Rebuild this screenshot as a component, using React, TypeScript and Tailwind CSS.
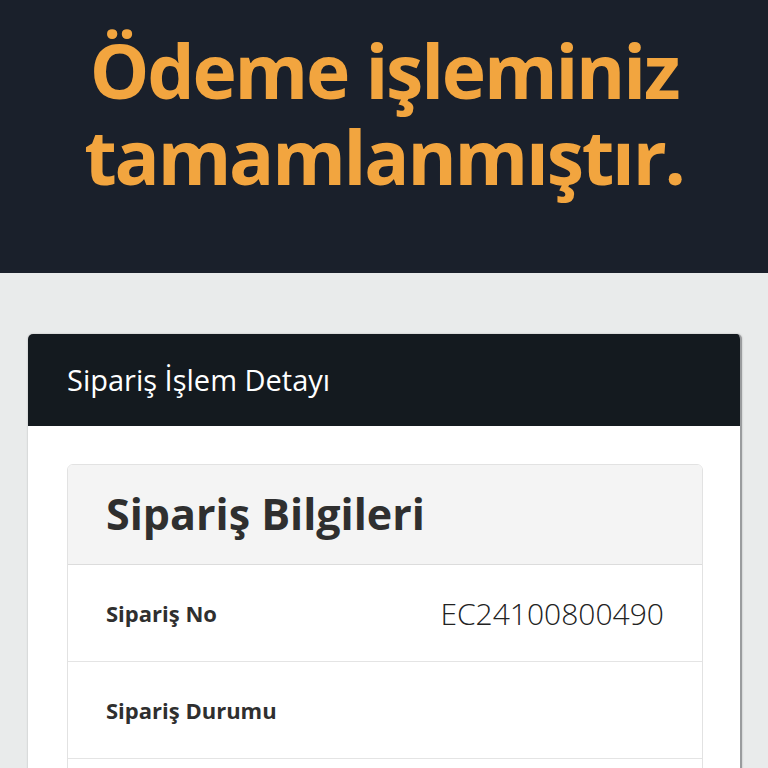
export default function App() {
  const rows = [
    { label: 'Sipariş No', value: 'EC24100800490' },
    { label: 'Sipariş Durumu', value: '' },
    { label: '', value: '' },
  ]

  return (
    <div className="h-[768px] overflow-hidden bg-[#e9ebeb] font-['Open_Sans',sans-serif]">
      {/* Top banner */}
      <div className="h-[273px] bg-[#1a202b] flex justify-center pt-[27px]">
        <h1 className="text-center text-[75px] leading-[86px] font-bold tracking-[-2.2px] text-[#f2a53f]">
          Ödeme işleminiz
          <br />
          tamamlanmıştır.
        </h1>
      </div>

      {/* Detail card */}
      <div className="pl-[28px] pr-[26px] pt-[61px]">
        <div className="rounded-[5px] border-r-2 border-[#9a9c9e] bg-white shadow-[0_0_2px_rgba(0,0,0,0.25)] overflow-hidden">
          <div className="h-[92px] bg-[#141a1f] flex items-center px-[39px]">
            <span className="text-[29px] text-white">Sipariş İşlem Detayı</span>
          </div>
          <div className="pl-[39px] pr-[37px] pt-[38px] pb-[40px]">
            <div className="rounded-[6px] border border-[#e2e2e2] overflow-hidden">
              <div className="h-[100px] bg-[#f4f4f4] flex items-center px-[38px] border-b border-[#dcdcdc]">
                <h2 className="text-[43px] font-bold text-[#2f2f2f]">Sipariş Bilgileri</h2>
              </div>
              {rows.map((r, i) => (
                <div key={i} className="h-[97px] flex items-center justify-between px-[38px] border-b border-[#e4e4e4]">
                  <span className="text-[22px] font-bold text-[#2f2f2f]">{r.label}</span>
                  <span className="text-[30px] font-light text-[#222]">{r.value}</span>
                </div>
              ))}
            </div>
          </div>
        </div>
      </div>
    </div>
  )
}
